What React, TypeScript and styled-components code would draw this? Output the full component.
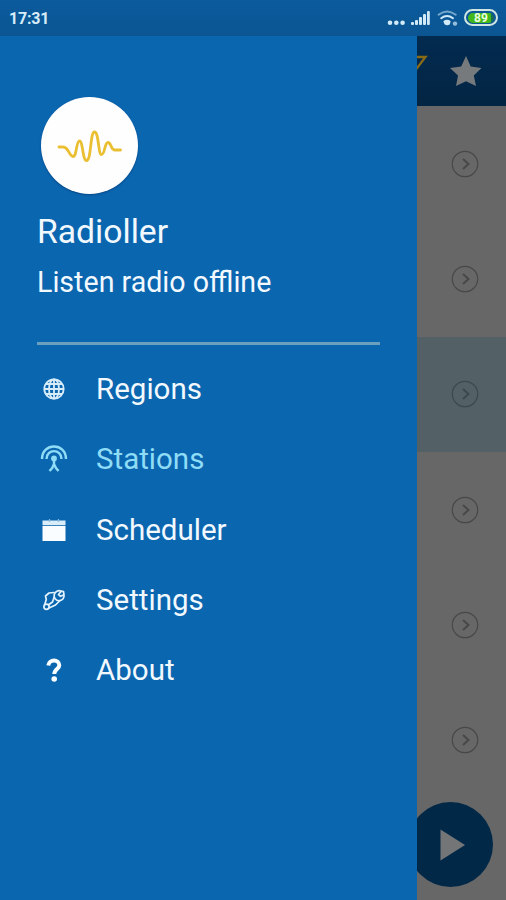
import React from "react";
import styled, { createGlobalStyle } from "styled-components";

const GlobalStyle = createGlobalStyle`
  * { box-sizing: border-box; }
  body { margin: 0; background: #676767; font-family: Roboto, "Liberation Sans", sans-serif; }
`;

const Screen = styled.div`
  width: 506px;
  height: 900px;
  overflow: hidden;
  display: flex;
  flex-direction: column;
  background: #676767;
`;

const StatusBar = styled.header`
  height: 36px;
  flex: none;
  display: flex;
  align-items: center;
  justify-content: space-between;
  padding: 0 7px 0 9px;
  background: linear-gradient(#0b5b9d, #0b5592);
`;

const Clock = styled.time`
  font-size: 16px;
  line-height: 20px;
  font-weight: 700;
  letter-spacing: -0.2px;
  color: #d6edf9;
  padding-top: 1px;
`;

const Indicators = styled.div`
  display: flex;
  align-items: center;
  height: 36px;
`;

const Battery = styled.div`
  width: 34px;
  height: 17px;
  margin-left: 6px;
  margin-right: 1px;
  margin-top: -1px;
  padding: 1.5px 2px;
  border: 2px solid #cfe6e2;
  border-radius: 9px;
`;

const BatteryLevel = styled.div`
  height: 100%;
  border-radius: 6px;
  background: linear-gradient(90deg, #42b71c 88%, #176c55 88%);
  color: #e9ffdf;
  font-size: 12px;
  line-height: 10.500px;
  font-weight: 700;
  text-align: center;
`;

const Body = styled.div`
  flex: 1;
  display: flex;
  min-height: 0;
`;

const Drawer = styled.aside`
  width: 417px;
  flex: none;
  padding: 61px 37px 0;
  background: #0b66b0;
  color: #f2f9fe;
`;

const Logo = styled.div`
  width: 97px;
  height: 97px;
  margin-left: 4px;
  border-radius: 50%;
  background: #fefefe;
  box-shadow: 0 1px 2px rgba(0, 30, 80, 0.45);
  svg { display: block; }
`;

const AppName = styled.h1`
  margin: 18px 0 0;
  font-size: 33.7px;
  line-height: 40px;
  font-weight: 400;
`;

const Tagline = styled.p`
  margin: 13px 0 0;
  font-size: 28.6px;
  line-height: 34px;
  white-space: nowrap;
`;

const Divider = styled.hr`
  height: 3px;
  margin: 43px 0 9px;
  border: 0;
  background: #6aa0bd;
`;

const Menu = styled.nav`
  display: flex;
  flex-direction: column;
`;

const MenuItem = styled.a<{ $active?: boolean }>`
  display: grid;
  grid-template-columns: 34px 1fr;
  column-gap: 25px;
  align-items: center;
  height: 70.25px;
  font-size: 29.5px;
  line-height: 36px;
  color: ${(p) => (p.$active ? "#8fdcf6" : "#f2f9fe")};
  svg { display: block; }
`;

const Content = styled.main`
  flex: 1;
  display: flex;
  flex-direction: column;
  position: relative;
  overflow: hidden;
`;

const Toolbar = styled.div`
  height: 70px;
  flex: none;
  background: linear-gradient(#022b50, #032543);
  svg { display: block; }
`;

const StationRow = styled.div<{ $selected?: boolean }>`
  height: 115.3px;
  flex: none;
  display: flex;
  align-items: center;
  padding-left: 34px;
  background: ${(p) => (p.$selected ? "#536166" : "transparent")};
  color: ${(p) => (p.$selected ? "#3b494e" : "#484848")};
`;

const PlayButton = styled.button`
  position: absolute;
  right: 13px;
  bottom: 13.5px;
  width: 85px;
  height: 85px;
  padding: 0;
  border: 0;
  border-radius: 50%;
  background: #022848;
  svg { display: block; }
`;

const SignalIcon = () => (
  <svg width="72" height="36" viewBox="386 0 72 36">
    <g fill="#d2e9f7">
      <circle cx="390" cy="22.7" r="2.3" />
      <circle cx="396.3" cy="22.7" r="2.3" />
      <circle cx="402.6" cy="22.7" r="2.3" />
      <rect x="411" y="22" width="3" height="3" rx="1" />
      <rect x="415" y="20" width="3" height="5" rx="1" />
      <rect x="419" y="17" width="3" height="8" rx="1" />
      <rect x="423" y="14" width="3" height="11" rx="1" />
      <rect x="427" y="11" width="2.8" height="14" rx="1" />
      <circle cx="455" cy="23.6" r="2.2" opacity=".7" />
      <path d="M443.3 21.2Q447 18.5 450.7 21.2L449.7 24.5Q447 26 444.5 24.2Z" />
    </g>
    <g fill="none" stroke="#d2e9f7" strokeLinecap="round">
      <path d="M438.5 14.8Q447 8.2 455.8 14.8" strokeWidth="1.8" opacity=".55" />
      <path d="M441.2 18.2Q447 13.8 453 18.2" strokeWidth="2" />
    </g>
  </svg>
);

const WaveIcon = () => (
  <svg width="97" height="97" viewBox="41 97 97 97" fill="none" stroke="#eabf32" strokeWidth="2.8" strokeLinecap="round" strokeLinejoin="round">
    <path d="M59 147H63C69 147 69 156.500 73 156.500C77 156.500 76 141 79.5 141C83 141 82.5 160.500 86.500 160.500C91.500 160.500 90 132 94.500 132C99 132 98 154.500 101.500 154.500C105 154.500 104.500 142.500 108 142.500C111.500 142.500 110.500 150 115 150H120.500" />
  </svg>
);

const GlobeIcon = () => (
  <svg width="34" height="34" viewBox="0 0 34 34" fill="none" stroke="#d8edfa" strokeWidth="1.8">
    <circle cx="17" cy="17" r="9.7" />
    <ellipse cx="17" cy="17" rx="5" ry="9.700" />
    <path d="M17 7V27M7 17H27M9 12H25M9 22H25" />
  </svg>
);

const AntennaIcon = () => (
  <svg width="34" height="34" viewBox="0 0 34 34" fill="none" stroke="currentColor" strokeWidth="2.4">
    <path d="M5 17C5 .4 29 .4 29 17M9.500 17C9.500 6.500 24.500 6.500 24.500 17" />
    <circle cx="17" cy="16.500" r="2.900" fill="currentColor" stroke="none" />
    <path d="M17 17V22L15.200 26L12.500 29M17 22L19 26L21.500 29" />
  </svg>
);

const CalendarIcon = () => (
  <svg width="34" height="34" viewBox="0 0 34 34">
    <path d="M5.500 7.500H28.500V12H5.500Z" fill="#d9edf9" />
    <path d="M5.500 12.800H28.500V28H5.500Z" fill="#fafdff" />
    <path d="M12.500 6V9M21.500 6V9" stroke="#8dbbdc" strokeWidth="1.200" />
  </svg>
);

const WrenchIcon = () => (
  <svg width="34" height="34" viewBox="0 0 34 34" fill="none" stroke="#e2f3fd" strokeWidth="1.700" strokeLinejoin="round" strokeLinecap="round">
    <path d="M17 9.500L12 10L8.500 13L9.300 16.500L8 20.500" />
    <circle cx="9.500" cy="23.800" r="2.600" />
    <path d="M12.500 24.800L18.500 22L23 17.500" />
    <path d="M24.200 8.200A5 5 0 1 0 27 11.800L23.500 13.300L21.500 11.500L24.200 8.200L26.500 8.500L27 11.800" />
    <path d="M17.200 14L15.500 19L12 21.500" />
  </svg>
);

const HelpIcon = () => (
  <svg width="34" height="34" viewBox="0 0 34 34">
    <path d="M11.300 12.500C12 6 22.300 6 22.300 12.200C22.300 16 17.300 16 17.300 21" fill="none" stroke="#fafdff" strokeWidth="4" />
    <circle cx="17.200" cy="26" r="2.800" fill="#fafdff" />
  </svg>
);

const ToolbarIcons = () => (
  <svg width="89" height="70" viewBox="417 36 89 70">
    <path d="M415 57H425.500L414 72" fill="none" stroke="#876b16" strokeWidth="2.300" />
    <path d="M466 56L470.700 66.500L481.500 68L473.800 75.500L476 86L466 81.200L456 86L458 75.500L450 68L461.200 66.500Z" fill="#777a7d" />
  </svg>
);

const ChevronIcon = () => (
  <svg width="28" height="28" viewBox="0 0 28 28" fill="none" stroke="currentColor">
    <circle cx="14" cy="14" r="12.700" strokeWidth="1.200" />
    <path d="M12 9L17.500 14L12 19" strokeWidth="2" />
  </svg>
);

const PlayIcon = () => (
  <svg width="85" height="85" viewBox="0 0 85 85">
    <path d="M32.500 27.500L57 43L32.500 58.500Z" fill="#737577" />
  </svg>
);

const menuItems = [
  { label: "Regions", Icon: GlobeIcon },
  { label: "Stations", Icon: AntennaIcon, active: true },
  { label: "Scheduler", Icon: CalendarIcon },
  { label: "Settings", Icon: WrenchIcon },
  { label: "About", Icon: HelpIcon },
];

const stationRows = [false, false, true, false, false, false];

export default function App() {
  return (
    <>
      <GlobalStyle />
      <Screen>
        <StatusBar>
          <Clock>17:31</Clock>
          <Indicators>
            <SignalIcon />
            <Battery><BatteryLevel>89</BatteryLevel></Battery>
          </Indicators>
        </StatusBar>
        <Body>
          <Drawer>
            <Logo><WaveIcon /></Logo>
            <AppName>Radioller</AppName>
            <Tagline>Listen radio offline</Tagline>
            <Divider />
            <Menu>
              {menuItems.map(({ label, Icon, active }) => (
                <MenuItem key={label} $active={active}>
                  <Icon />
                  <span>{label}</span>
                </MenuItem>
              ))}
            </Menu>
          </Drawer>
          <Content>
            <Toolbar><ToolbarIcons /></Toolbar>
            {stationRows.map((selected, i) => (
              <StationRow key={i} $selected={selected}><ChevronIcon /></StationRow>
            ))}
            <PlayButton aria-label="Play"><PlayIcon /></PlayButton>
          </Content>
        </Body>
      </Screen>
    </>
  );
}
